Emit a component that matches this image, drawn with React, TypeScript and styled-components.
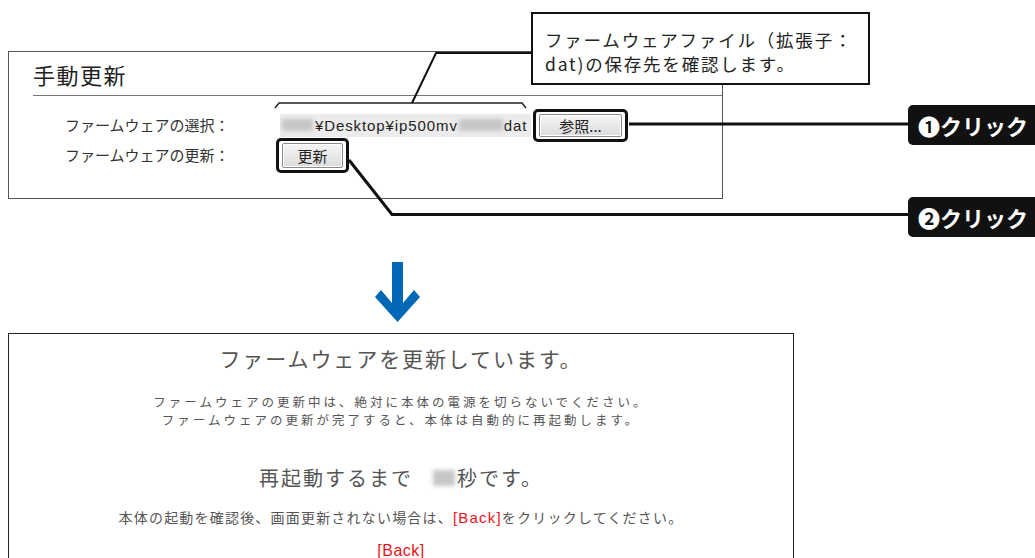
import React from "react";
import styled, { createGlobalStyle } from "styled-components";

const GlobalStyle = createGlobalStyle`
  html, body { margin: 0; padding: 0; background: #fff; }
  body { font-family: "Noto Sans CJK JP", "Noto Sans", sans-serif; color: #333; }
  * { box-sizing: border-box; }
`;

const Page = styled.div`
  width: 1035px;
  height: 558px;
  overflow: hidden;
  position: relative;
  background: #fff;
`;

const TopStage = styled.section`
  position: relative;
  height: 240px;
  padding: 51px 0 0 8px;
`;

const Panel = styled.div`
  width: 715px;
  height: 148px;
  border: 1px solid #555;
  padding: 9px 0 0 24px;
`;

const PanelTitle = styled.h2`
  margin: 0;
  font-size: 22px;
  font-weight: normal;
  line-height: 26px;
  letter-spacing: 1.5px;
  color: #222;
  padding-bottom: 8px;
  border-bottom: 1px solid #777;
`;

const Form = styled.div`
  margin: 14px 0 0 32px;
  display: grid;
  grid-template-columns: 215px auto;
  grid-auto-rows: 30px;
  align-items: center;
`;

const Label = styled.span`
  font-size: 15px;
  line-height: 20px;
  color: #333;
  white-space: nowrap;
`;

const Controls = styled.div<{ $indent?: number }>`
  display: flex;
  align-items: center;
  gap: 8px;
  padding-left: ${(p) => p.$indent ?? 0}px;
`;

const FileField = styled.div`
  width: 251px;
  height: 23px;
  background: #ececec;
  display: flex;
  align-items: center;
  overflow: hidden;
  font-family: "Liberation Sans", Arial, sans-serif;
  font-size: 15px;
  letter-spacing: 0.9px;
  color: #222;
  white-space: nowrap;
`;

const Smudge = styled.span<{ $w: number; $h?: number; $gap?: string }>`
  display: inline-block;
  flex-shrink: 0;
  width: ${(p) => p.$w}px;
  height: ${(p) => p.$h ?? 12}px;
  margin: ${(p) => p.$gap ?? "0 1px"};
  background: #c6c6c6;
  filter: blur(2px);
  vertical-align: middle;
`;

const Focus = styled.span`
  position: relative;
  display: inline-flex;
`;

const Ring = styled.span`
  position: absolute;
  inset: -5px -6px;
  border: 3px solid #111;
  border-radius: 5px;
  pointer-events: none;
`;

const PushButton = styled.button<{ $w: number; $h: number }>`
  width: ${(p) => p.$w}px;
  height: ${(p) => p.$h}px;
  padding: 0;
  font-family: "Noto Sans CJK JP", sans-serif;
  font-size: 15px;
  line-height: 1;
  color: #222;
  background: linear-gradient(#f6f6f6, #dcdcdc);
  border: 1px solid #8a8a8a;
  border-radius: 2px;
  box-shadow: inset 0 0 0 1px #fff;
`;

const Leaders = styled.svg`
  position: absolute;
  left: 0;
  top: 0;
  pointer-events: none;
`;

const Callout = styled.div`
  position: absolute;
  left: 531px;
  top: 12px;
  width: 339px;
  height: 73px;
  border: 2px solid #111;
  background: #fff;
  padding: 14px 6px 0 12px;
  font-size: 17.5px;
  letter-spacing: 1.8px;
  line-height: 24px;
  color: #222;
`;

const CalloutLine = styled.span`
  display: block;
  white-space: nowrap;
`;

const Badge = styled.div<{ $top: number }>`
  position: absolute;
  left: 908px;
  top: ${(p) => p.$top}px;
  width: 140px;
  height: 40px;
  background: #111;
  border-radius: 5px;
  color: #fff;
  font-weight: bold;
  font-size: 22px;
  display: flex;
  align-items: center;
  padding-left: 10px;
  white-space: nowrap;
`;

const ArrowRow = styled.div`
  width: 795px;
  height: 60px;
  margin-top: 22px;
  display: flex;
  justify-content: center;
`;

const StatusPanel = styled.section`
  margin: 11px 0 0 8px;
  width: 786px;
  height: 260px;
  border: 1px solid #222;
  padding-top: 9px;
  display: flex;
  flex-direction: column;
  align-items: center;
  color: #555;
`;

const StatusTitle = styled.h1`
  margin: 0;
  font-size: 21px;
  font-weight: normal;
  letter-spacing: 1.9px;
  line-height: 30px;
`;

const Notice = styled.p`
  margin: 20px 0 0;
  font-size: 12.5px;
  letter-spacing: 3px;
  line-height: 18.2px;
  text-align: center;
`;

const Countdown = styled.p`
  margin: 34px 0 0;
  font-size: 20px;
  letter-spacing: 2px;
  line-height: 30px;
  display: flex;
  align-items: center;
`;

const Hint = styled.p`
  margin: 14px 0 0;
  font-size: 14px;
  letter-spacing: 1.2px;
  line-height: 20px;
`;

const BackLink = styled.a<{ $size?: number }>`
  color: #e8141c;
  text-decoration: none;
  font-family: "Liberation Sans", Arial, sans-serif;
  font-size: ${(p) => p.$size ?? 15}px;
`;

const BackRow = styled.div`
  margin-top: 11px;
  line-height: 20px;
  letter-spacing: 0.5px;
`;

export default function App() {
  return (
    <Page>
      <GlobalStyle />
      <TopStage>
        <Panel>
          <PanelTitle>手動更新</PanelTitle>
          <Form>
            <Label>ファームウェアの選択：</Label>
            <Controls>
              <FileField>
                <Smudge $w={31} $gap="0 2px 0 2px" />
                ¥Desktop¥ip500mv
                <Smudge $w={44} $gap="0 1px" />
                dat
              </FileField>
              <Focus>
                <PushButton $w={83} $h={23}>参照...</PushButton>
                <Ring />
              </Focus>
            </Controls>
            <Label>ファームウェアの更新：</Label>
            <Controls $indent={2}>
              <Focus>
                <PushButton $w={61} $h={25}>更新</PushButton>
                <Ring />
              </Focus>
            </Controls>
          </Form>
        </Panel>

        <Leaders width={1035} height={240} viewBox="0 0 1035 240">
          <path d="M275 108 L279 103 L522 103 L526 108" fill="none" stroke="#222" strokeWidth={1.5} />
          <path d="M412 103 L436 53 L532 53" fill="none" stroke="#111" strokeWidth={2} />
          <path d="M629 124 L910 124" fill="none" stroke="#111" strokeWidth={3} />
          <path d="M349 160 L392 214.5 L910 214.5" fill="none" stroke="#111" strokeWidth={3} />
        </Leaders>

        <Callout>
          <CalloutLine>ファームウェアファイル（拡張子：</CalloutLine>
          <CalloutLine>dat)の保存先を確認します。</CalloutLine>
        </Callout>

        <Badge $top={105}>❶クリック</Badge>
        <Badge $top={197}>❷クリック</Badge>
      </TopStage>

      <ArrowRow>
        <svg width="45" height="60" viewBox="0 0 45 60">
          <polygon
            points="17,0 28,0 28,41 39,28 45,35 22.5,60 0,35 6,28 17,41"
            fill="#0068b7"
          />
        </svg>
      </ArrowRow>

      <StatusPanel>
        <StatusTitle>ファームウェアを更新しています。</StatusTitle>
        <Notice>
          ファームウェアの更新中は、絶対に本体の電源を切らないでください。
          <br />
          ファームウェアの更新が完了すると、本体は自動的に再起動します。
        </Notice>
        <Countdown>
          再起動するまで
          <Smudge $w={22} $h={16} $gap="0 2px 0 20px" />
          秒です。
        </Countdown>
        <Hint>
          本体の起動を確認後、画面更新されない場合は、
          <BackLink href="#">[Back]</BackLink>
          をクリックしてください。
        </Hint>
        <BackRow>
          <BackLink href="#" $size={16}>[Back]</BackLink>
        </BackRow>
      </StatusPanel>
    </Page>
  );
}
